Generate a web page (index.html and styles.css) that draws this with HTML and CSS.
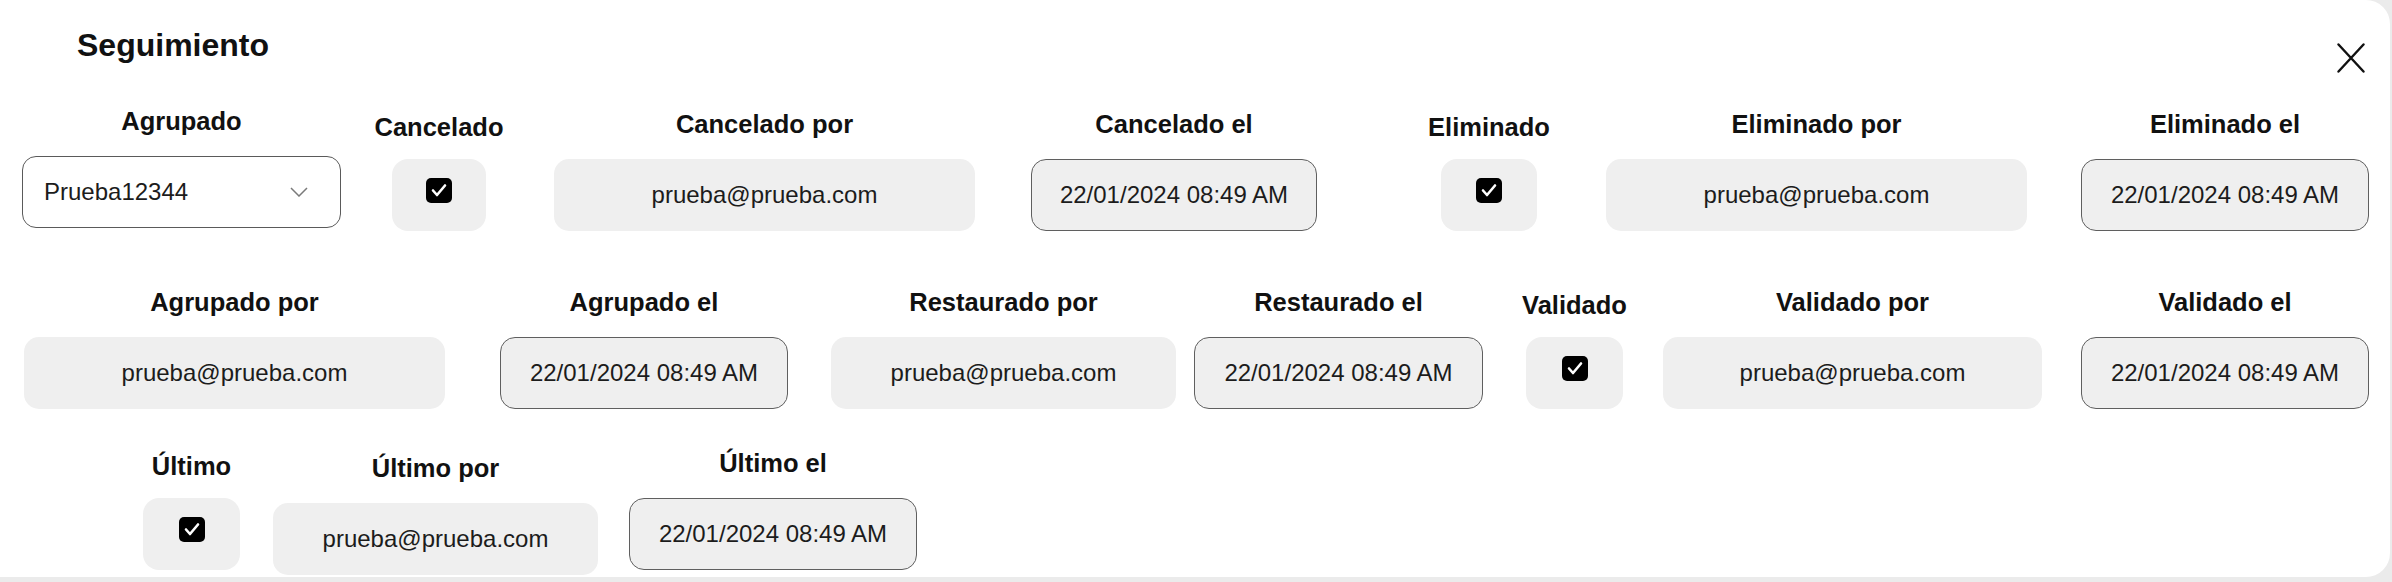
FILE: index.html
```html
<!DOCTYPE html>
<html lang="es">
<head>
<meta charset="utf-8">
<title>Seguimiento</title>
<link rel="stylesheet" href="styles.css">
</head>
<body>
<div class="card">
  <header class="head">
    <h2 class="title">Seguimiento</h2>
    <button class="close" aria-label="Cerrar">
      <svg width="28" height="30" viewBox="0 0 28 30"><path d="M1.5 1.5 L26.5 28.5 M26.5 1.5 L1.5 28.5" stroke="#111" stroke-width="2.4" stroke-linecap="round" fill="none"/></svg>
    </button>
  </header>

  <div class="row row1">
    <div class="col w319 up3">
      <span class="lbl">Agrupado</span>
      <div class="select"><span>Prueba12344</span>
        <svg class="chev" width="18" height="10" viewBox="0 0 18 10"><polyline points="1,1 9,9 17,1" fill="none" stroke="#7a7a7a" stroke-width="1.5"/></svg>
      </div>
    </div>
    <div class="col chk w94 ml51">
      <span class="lbl">Cancelado</span>
      <div class="tile"><span class="cb"><svg width="26" height="25" viewBox="0 0 26 25"><polyline points="7,12.5 11,17 19,7.5" fill="none" stroke="#fff" stroke-width="2.6" stroke-linecap="round" stroke-linejoin="round"/></svg></span></div>
    </div>
    <div class="col w421 ml68">
      <span class="lbl">Cancelado por</span>
      <div class="box">prueba@prueba.com</div>
    </div>
    <div class="col w286 ml56">
      <span class="lbl">Cancelado el</span>
      <div class="box date">22/01/2024 08:49 AM</div>
    </div>
    <div class="col chk w96 ml124">
      <span class="lbl">Eliminado</span>
      <div class="tile"><span class="cb"><svg width="26" height="25" viewBox="0 0 26 25"><polyline points="7,12.5 11,17 19,7.5" fill="none" stroke="#fff" stroke-width="2.6" stroke-linecap="round" stroke-linejoin="round"/></svg></span></div>
    </div>
    <div class="col w421 ml69">
      <span class="lbl">Eliminado por</span>
      <div class="box">prueba@prueba.com</div>
    </div>
    <div class="col w288 ml54">
      <span class="lbl">Eliminado el</span>
      <div class="box date">22/01/2024 08:49 AM</div>
    </div>
  </div>

  <div class="row row2">
    <div class="col w421 ml2">
      <span class="lbl">Agrupado por</span>
      <div class="box">prueba@prueba.com</div>
    </div>
    <div class="col w288 ml55">
      <span class="lbl">Agrupado el</span>
      <div class="box date">22/01/2024 08:49 AM</div>
    </div>
    <div class="col w345 ml43">
      <span class="lbl">Restaurado por</span>
      <div class="box">prueba@prueba.com</div>
    </div>
    <div class="col w289 ml18">
      <span class="lbl">Restaurado el</span>
      <div class="box date">22/01/2024 08:49 AM</div>
    </div>
    <div class="col chk w97 ml43">
      <span class="lbl">Validado</span>
      <div class="tile"><span class="cb"><svg width="26" height="25" viewBox="0 0 26 25"><polyline points="7,12.5 11,17 19,7.5" fill="none" stroke="#fff" stroke-width="2.6" stroke-linecap="round" stroke-linejoin="round"/></svg></span></div>
    </div>
    <div class="col w379 ml40">
      <span class="lbl">Validado por</span>
      <div class="box">prueba@prueba.com</div>
    </div>
    <div class="col w288 ml39">
      <span class="lbl">Validado el</span>
      <div class="box date">22/01/2024 08:49 AM</div>
    </div>
  </div>

  <div class="row row3">
    <div class="col chk w97 ml121">
      <span class="lbl">Último</span>
      <div class="tile"><span class="cb"><svg width="26" height="25" viewBox="0 0 26 25"><polyline points="7,12.5 11,17 19,7.5" fill="none" stroke="#fff" stroke-width="2.6" stroke-linecap="round" stroke-linejoin="round"/></svg></span></div>
    </div>
    <div class="col w325 ml33 down5">
      <span class="lbl">Último por</span>
      <div class="box">prueba@prueba.com</div>
    </div>
    <div class="col w288 ml31">
      <span class="lbl">Último el</span>
      <div class="box date">22/01/2024 08:49 AM</div>
    </div>
  </div>
</div>
</body>
</html>
```

FILE: styles.css
```css
html, body {
  margin: 0;
  padding: 0;
  background: #ebebeb;
}
body {
  font-family: "Liberation Sans", Arial, sans-serif;
  color: #1c1c1c;
  width: 2392px;
  height: 582px;
  overflow: hidden;
}
.card {
  box-sizing: border-box;
  width: 2390px;
  height: 577px;
  background: #ffffff;
  border-radius: 0 24px 24px 0;
  padding: 0 21px 0 22px;
  overflow: hidden;
}
.head {
  display: flex;
  justify-content: space-between;
  align-items: flex-start;
}
.title {
  margin: 27px 0 0 55px;
  font-size: 32px;
  line-height: 37px;
  font-weight: 700;
  color: #111;
}
.close {
  margin-top: 40px;
  width: 36px;
  height: 36px;
  padding: 0;
  border: 0;
  background: transparent;
  display: flex;
  align-items: center;
  justify-content: center;
}
.row {
  display: flex;
  align-items: flex-start;
}
.row1 { margin-top: 34px; }
.row2 { margin-top: 57px; }
.row3 { margin-top: 40px; }

.col {
  display: flex;
  flex-direction: column;
  align-items: center;
  flex: none;
}
.lbl {
  display: block;
  white-space: nowrap;
  font-size: 25.5px;
  line-height: 29px;
  font-weight: 700;
  color: #111;
  margin-bottom: 20px;
}
.chk .lbl {
  margin-top: 3px;
  margin-bottom: 17px;
}
.up3 { margin-top: -3px; }
.down5 { margin-top: 5px; }

.box, .select, .tile {
  box-sizing: border-box;
  width: 100%;
  height: 72px;
}
.box {
  display: flex;
  align-items: center;
  justify-content: center;
  background: #efefef;
  border-radius: 15px;
  font-size: 24px;
  white-space: nowrap;
}
.box.date {
  border: 1.5px solid #5f5f5f;
  border-radius: 15px;
}
.select {
  display: flex;
  align-items: center;
  justify-content: space-between;
  border: 1.5px solid #5a5a5a;
  border-radius: 14px;
  background: #fff;
  padding: 0 32px 0 21px;
  font-size: 24px;
}
.chev { display: block; }
.tile {
  display: flex;
  justify-content: center;
  align-items: flex-start;
  padding-top: 19px;
  background: #efefef;
  border-radius: 16px;
}
.cb {
  display: block;
  width: 26px;
  height: 25px;
  background: #000;
  border-radius: 5px;
}
.cb svg { display: block; }

.w94 { width: 94px; }
.w96 { width: 96px; }
.w97 { width: 97px; }
.w286 { width: 286px; }
.w288 { width: 288px; }
.w289 { width: 289px; }
.w319 { width: 319px; }
.w325 { width: 325px; }
.w345 { width: 345px; }
.w379 { width: 379px; }
.w421 { width: 421px; }

.ml2 { margin-left: 2px; }
.ml18 { margin-left: 18px; }
.ml31 { margin-left: 31px; }
.ml33 { margin-left: 33px; }
.ml39 { margin-left: 39px; }
.ml40 { margin-left: 40px; }
.ml43 { margin-left: 43px; }
.ml51 { margin-left: 51px; }
.ml54 { margin-left: 54px; }
.ml55 { margin-left: 55px; }
.ml56 { margin-left: 56px; }
.ml68 { margin-left: 68px; }
.ml69 { margin-left: 69px; }
.ml121 { margin-left: 121px; }
.ml124 { margin-left: 124px; }
```
